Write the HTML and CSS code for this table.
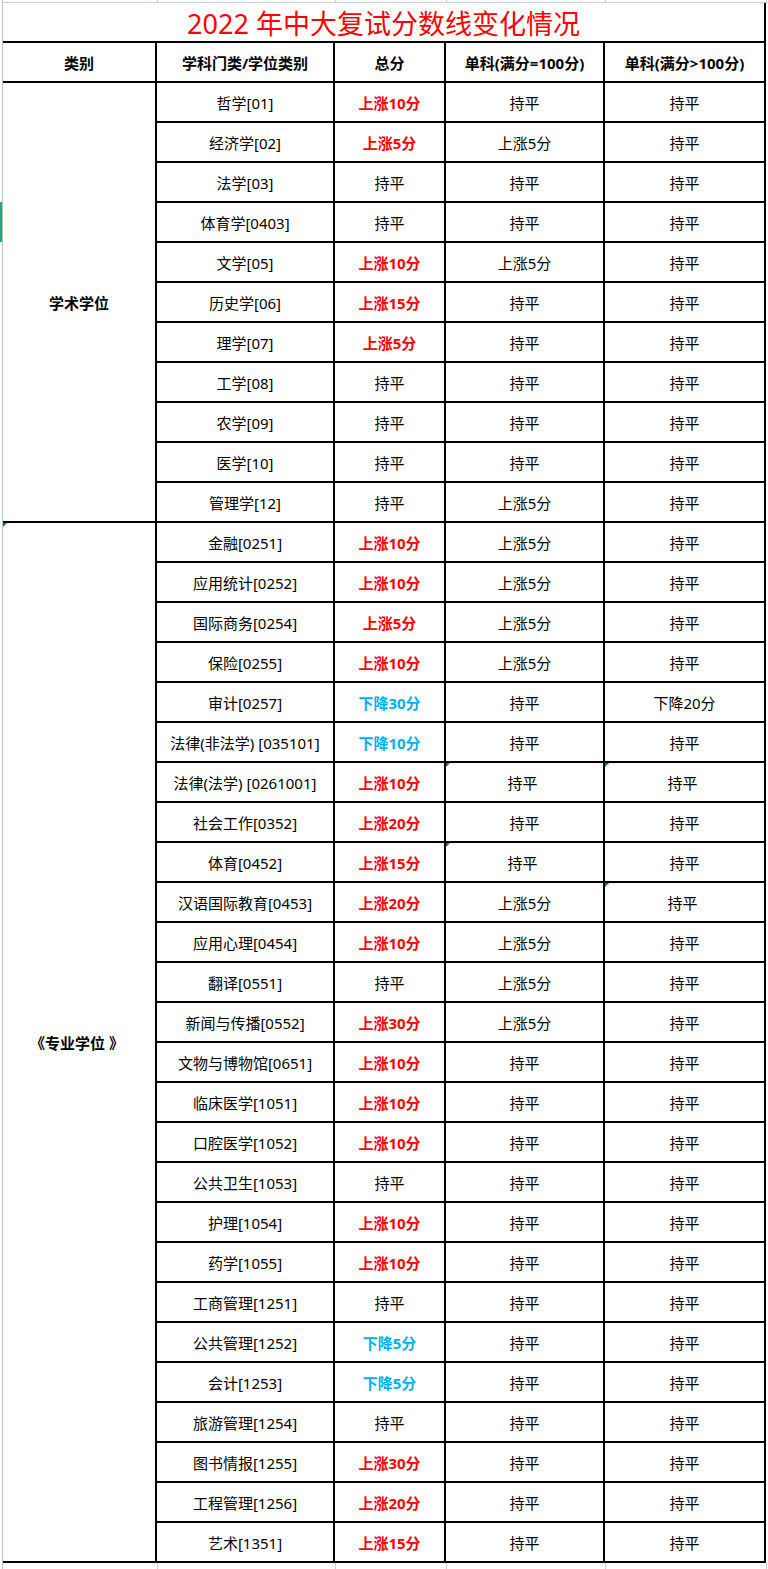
FILE: index.html
```html
<!DOCTYPE html>
<html lang="zh-CN">
<head>
<meta charset="utf-8">
<title>2022 年中大复试分数线变化情况</title>
<link rel="stylesheet" href="styles.css">
</head>
<body>
<div class="page">
  <div class="gutter"><div class="row-mark"></div></div>
  <div class="sheet">
    <div class="strip strip-top"><span></span><span></span><span></span><span></span><span></span></div>
    <div class="grid">
      <div class="cell title">2022 年中大复试分数线变化情况</div>
      <div class="cell head">类别</div>
      <div class="cell head">学科门类/学位类别</div>
      <div class="cell head">总分</div>
      <div class="cell head">单科(满分=100分)</div>
      <div class="cell head">单科(满分&gt;100分)</div>

      <div class="cell group g-academic">学术学位</div>
      <div class="cell">哲学[01]</div><div class="cell up">上涨10分</div><div class="cell">持平</div><div class="cell">持平</div>
      <div class="cell">经济学[02]</div><div class="cell up">上涨5分</div><div class="cell">上涨5分</div><div class="cell">持平</div>
      <div class="cell">法学[03]</div><div class="cell">持平</div><div class="cell">持平</div><div class="cell">持平</div>
      <div class="cell">体育学[0403]</div><div class="cell">持平</div><div class="cell">持平</div><div class="cell">持平</div>
      <div class="cell">文学[05]</div><div class="cell up">上涨10分</div><div class="cell">上涨5分</div><div class="cell">持平</div>
      <div class="cell">历史学[06]</div><div class="cell up">上涨15分</div><div class="cell">持平</div><div class="cell">持平</div>
      <div class="cell">理学[07]</div><div class="cell up">上涨5分</div><div class="cell">持平</div><div class="cell">持平</div>
      <div class="cell">工学[08]</div><div class="cell">持平</div><div class="cell">持平</div><div class="cell">持平</div>
      <div class="cell">农学[09]</div><div class="cell">持平</div><div class="cell">持平</div><div class="cell">持平</div>
      <div class="cell">医学[10]</div><div class="cell">持平</div><div class="cell">持平</div><div class="cell">持平</div>
      <div class="cell">管理学[12]</div><div class="cell">持平</div><div class="cell">上涨5分</div><div class="cell">持平</div>

      <div class="cell group g-pro flag">《专业学位 》</div>
      <div class="cell">金融[0251]</div><div class="cell up">上涨10分</div><div class="cell">上涨5分</div><div class="cell">持平</div>
      <div class="cell">应用统计[0252]</div><div class="cell up">上涨10分</div><div class="cell">上涨5分</div><div class="cell">持平</div>
      <div class="cell">国际商务[0254]</div><div class="cell up">上涨5分</div><div class="cell">上涨5分</div><div class="cell">持平</div>
      <div class="cell">保险[0255]</div><div class="cell up">上涨10分</div><div class="cell">上涨5分</div><div class="cell">持平</div>
      <div class="cell">审计[0257]</div><div class="cell down">下降30分</div><div class="cell">持平</div><div class="cell">下降20分</div>
      <div class="cell">法律(非法学) [035101]</div><div class="cell down">下降10分</div><div class="cell">持平</div><div class="cell">持平</div>
      <div class="cell">法律(法学) [0261001]</div><div class="cell up">上涨10分</div><div class="cell flag shift">持平</div><div class="cell flag shift">持平</div>
      <div class="cell">社会工作[0352]</div><div class="cell up">上涨20分</div><div class="cell">持平</div><div class="cell">持平</div>
      <div class="cell">体育[0452]</div><div class="cell up">上涨15分</div><div class="cell flag shift">持平</div><div class="cell">持平</div>
      <div class="cell">汉语国际教育[0453]</div><div class="cell up">上涨20分</div><div class="cell">上涨5分</div><div class="cell flag shift">持平</div>
      <div class="cell">应用心理[0454]</div><div class="cell up">上涨10分</div><div class="cell">上涨5分</div><div class="cell">持平</div>
      <div class="cell">翻译[0551]</div><div class="cell">持平</div><div class="cell">上涨5分</div><div class="cell">持平</div>
      <div class="cell">新闻与传播[0552]</div><div class="cell up">上涨30分</div><div class="cell">上涨5分</div><div class="cell">持平</div>
      <div class="cell">文物与博物馆[0651]</div><div class="cell up">上涨10分</div><div class="cell">持平</div><div class="cell">持平</div>
      <div class="cell">临床医学[1051]</div><div class="cell up">上涨10分</div><div class="cell">持平</div><div class="cell">持平</div>
      <div class="cell">口腔医学[1052]</div><div class="cell up">上涨10分</div><div class="cell">持平</div><div class="cell">持平</div>
      <div class="cell">公共卫生[1053]</div><div class="cell">持平</div><div class="cell">持平</div><div class="cell">持平</div>
      <div class="cell">护理[1054]</div><div class="cell up">上涨10分</div><div class="cell">持平</div><div class="cell">持平</div>
      <div class="cell">药学[1055]</div><div class="cell up">上涨10分</div><div class="cell">持平</div><div class="cell">持平</div>
      <div class="cell">工商管理[1251]</div><div class="cell">持平</div><div class="cell">持平</div><div class="cell">持平</div>
      <div class="cell">公共管理[1252]</div><div class="cell down">下降5分</div><div class="cell">持平</div><div class="cell">持平</div>
      <div class="cell">会计[1253]</div><div class="cell down">下降5分</div><div class="cell">持平</div><div class="cell">持平</div>
      <div class="cell">旅游管理[1254]</div><div class="cell">持平</div><div class="cell">持平</div><div class="cell">持平</div>
      <div class="cell">图书情报[1255]</div><div class="cell up">上涨30分</div><div class="cell">持平</div><div class="cell">持平</div>
      <div class="cell">工程管理[1256]</div><div class="cell up">上涨20分</div><div class="cell">持平</div><div class="cell">持平</div>
      <div class="cell">艺术[1351]</div><div class="cell up">上涨15分</div><div class="cell">持平</div><div class="cell">持平</div>
    </div>
    <div class="strip strip-bottom"><span></span><span></span><span></span><span></span><span></span></div>
  </div>
</div>
</body>
</html>
```

FILE: styles.css
```css
html, body {
  margin: 0;
  padding: 0;
  background: #ffffff;
}

body {
  width: 768px;
  height: 1569px;
  overflow: hidden;
  font-family: "Noto Sans", "Noto Sans CJK SC", sans-serif;
  color: #000000;
}

.page {
  display: flex;
  width: 768px;
  height: 1569px;
}

.gutter {
  position: relative;
  width: 3px;
  flex: 0 0 3px;
  box-sizing: border-box;
  border-right: 1px solid #b9c3d6;
  background: repeating-linear-gradient(
    to bottom,
    transparent 0,
    transparent 42px,
    #b9c3d6 42px,
    #b9c3d6 43px,
    transparent 43px,
    transparent 82px
  );
  background-size: 100% 40px;
  background-position: 0 2px;
}

.row-mark {
  position: absolute;
  left: 0;
  top: 202px;
  width: 2px;
  height: 40px;
  background: #21a870;
}

.sheet {
  flex: 1 1 auto;
  display: flex;
  flex-direction: column;
}

.strip {
  display: grid;
  grid-template-columns: 154px 178px 111px 159px 161px;
}

.strip span {
  box-sizing: border-box;
  border-right: 1px solid #c6cedd;
  margin-right: -1px;
}

.strip-top {
  height: 3px;
  border-bottom: 1px solid #c6cedd;
  box-sizing: border-box;
}

.strip-bottom {
  height: 6px;
}

.grid {
  display: grid;
  grid-template-columns: 154px 178px 111px 159px 161px;
  grid-auto-rows: 40px;
}

.cell {
  position: relative;
  box-sizing: border-box;
  border-right: 2px solid #000000;
  border-bottom: 2px solid #000000;
  display: flex;
  align-items: center;
  justify-content: center;
  font-size: 15px;
  white-space: nowrap;
}

.title {
  grid-column: 1 / span 5;
  color: #ff0000;
  font-size: 27px;
}

.head {
  font-weight: bold;
}

.group {
  font-weight: bold;
}

.g-academic {
  grid-row: span 11;
}

.g-pro {
  grid-row: span 26;
  padding-right: 4px;
}

.up {
  color: #ff0000;
  font-weight: bold;
}

.down {
  color: #00b0f0;
  font-weight: bold;
}

.shift {
  padding-right: 4px;
}

.flag::before {
  content: "";
  position: absolute;
  left: 0;
  top: 0;
  width: 0;
  height: 0;
  border-top: 4px solid #1c7a1c;
  border-right: 4px solid transparent;
}
```
